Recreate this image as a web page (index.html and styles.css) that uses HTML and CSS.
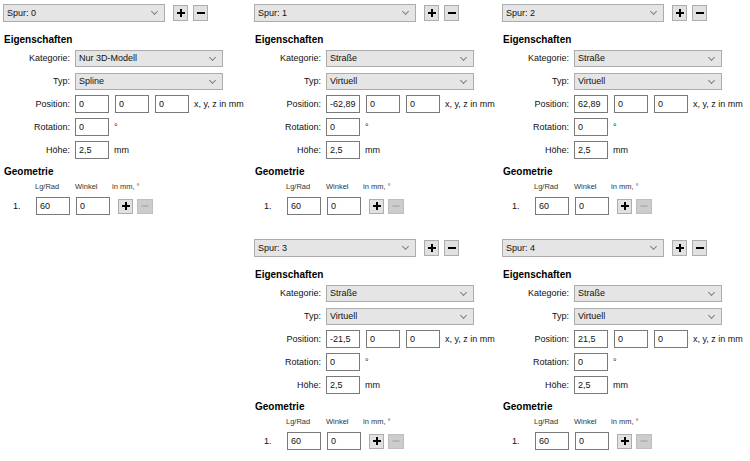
FILE: index.html
```html
<!DOCTYPE html>
<html lang="de">
<head>
    <meta charset="UTF-8">
    <meta name="viewport" content="width=device-width, initial-scale=1.0">
    <title>Spuren</title>
    <link rel="stylesheet" href="styles.css">
</head>
<body>
    <div class="sheet">
        <section class="panel">
            <div class="spur-row">
                <div class="combo spur">Spur: 0</div>
                <button class="tool"><svg viewBox="0 0 10 10"><path d="M5 1V9M1 5H9"/></svg></button>
                <button class="tool"><svg viewBox="0 0 10 10"><path d="M1 5H9"/></svg></button>
            </div>
            <h2 class="heading">Eigenschaften</h2>
            <div class="form">
                <label>Kategorie:</label>
                <div class="combo wide">Nur 3D-Modell</div>
                <label>Typ:</label>
                <div class="combo wide">Spline</div>
                <label>Position:</label>
                <div class="line">
                    <input class="field" value="0"><input class="field" value="0"><input class="field" value="0">
                    <span class="unit">x, y, z in mm</span>
                </div>
                <label>Rotation:</label>
                <div class="line"><input class="field" value="0"><span class="unit">°</span></div>
                <label>Höhe:</label>
                <div class="line"><input class="field" value="2,5"><span class="unit">mm</span></div>
            </div>
            <h2 class="heading geo">Geometrie</h2>
            <div class="geo-head"><span class="c1">Lg/Rad</span><span class="c2">Winkel</span><span>in mm, °</span></div>
            <div class="geo-row">
                <span class="num">1.</span>
                <input class="field" value="60"><input class="field" value="0">
                <button class="tool small"><svg viewBox="0 0 10 10"><path d="M5 1V9M1 5H9"/></svg></button>
                <button class="tool small off"><svg viewBox="0 0 10 10"><path d="M1.5 5H8.5"/></svg></button>
            </div>
        </section>

        <section class="panel">
            <div class="spur-row">
                <div class="combo spur">Spur: 1</div>
                <button class="tool"><svg viewBox="0 0 10 10"><path d="M5 1V9M1 5H9"/></svg></button>
                <button class="tool"><svg viewBox="0 0 10 10"><path d="M1 5H9"/></svg></button>
            </div>
            <h2 class="heading">Eigenschaften</h2>
            <div class="form">
                <label>Kategorie:</label>
                <div class="combo wide">Straße</div>
                <label>Typ:</label>
                <div class="combo wide">Virtuell</div>
                <label>Position:</label>
                <div class="line">
                    <input class="field" value="-62,89"><input class="field" value="0"><input class="field" value="0">
                    <span class="unit">x, y, z in mm</span>
                </div>
                <label>Rotation:</label>
                <div class="line"><input class="field" value="0"><span class="unit">°</span></div>
                <label>Höhe:</label>
                <div class="line"><input class="field" value="2,5"><span class="unit">mm</span></div>
            </div>
            <h2 class="heading geo">Geometrie</h2>
            <div class="geo-head"><span class="c1">Lg/Rad</span><span class="c2">Winkel</span><span>in mm, °</span></div>
            <div class="geo-row">
                <span class="num">1.</span>
                <input class="field" value="60"><input class="field" value="0">
                <button class="tool small"><svg viewBox="0 0 10 10"><path d="M5 1V9M1 5H9"/></svg></button>
                <button class="tool small off"><svg viewBox="0 0 10 10"><path d="M1.5 5H8.5"/></svg></button>
            </div>
        </section>

        <section class="panel">
            <div class="spur-row">
                <div class="combo spur">Spur: 2</div>
                <button class="tool"><svg viewBox="0 0 10 10"><path d="M5 1V9M1 5H9"/></svg></button>
                <button class="tool"><svg viewBox="0 0 10 10"><path d="M1 5H9"/></svg></button>
            </div>
            <h2 class="heading">Eigenschaften</h2>
            <div class="form">
                <label>Kategorie:</label>
                <div class="combo wide">Straße</div>
                <label>Typ:</label>
                <div class="combo wide">Virtuell</div>
                <label>Position:</label>
                <div class="line">
                    <input class="field" value="62,89"><input class="field" value="0"><input class="field" value="0">
                    <span class="unit">x, y, z in mm</span>
                </div>
                <label>Rotation:</label>
                <div class="line"><input class="field" value="0"><span class="unit">°</span></div>
                <label>Höhe:</label>
                <div class="line"><input class="field" value="2,5"><span class="unit">mm</span></div>
            </div>
            <h2 class="heading geo">Geometrie</h2>
            <div class="geo-head"><span class="c1">Lg/Rad</span><span class="c2">Winkel</span><span>in mm, °</span></div>
            <div class="geo-row">
                <span class="num">1.</span>
                <input class="field" value="60"><input class="field" value="0">
                <button class="tool small"><svg viewBox="0 0 10 10"><path d="M5 1V9M1 5H9"/></svg></button>
                <button class="tool small off"><svg viewBox="0 0 10 10"><path d="M1.5 5H8.5"/></svg></button>
            </div>
        </section>

        <div class="empty"></div>

        <section class="panel">
            <div class="spur-row">
                <div class="combo spur">Spur: 3</div>
                <button class="tool"><svg viewBox="0 0 10 10"><path d="M5 1V9M1 5H9"/></svg></button>
                <button class="tool"><svg viewBox="0 0 10 10"><path d="M1 5H9"/></svg></button>
            </div>
            <h2 class="heading">Eigenschaften</h2>
            <div class="form">
                <label>Kategorie:</label>
                <div class="combo wide">Straße</div>
                <label>Typ:</label>
                <div class="combo wide">Virtuell</div>
                <label>Position:</label>
                <div class="line">
                    <input class="field" value="-21,5"><input class="field" value="0"><input class="field" value="0">
                    <span class="unit">x, y, z in mm</span>
                </div>
                <label>Rotation:</label>
                <div class="line"><input class="field" value="0"><span class="unit">°</span></div>
                <label>Höhe:</label>
                <div class="line"><input class="field" value="2,5"><span class="unit">mm</span></div>
            </div>
            <h2 class="heading geo">Geometrie</h2>
            <div class="geo-head"><span class="c1">Lg/Rad</span><span class="c2">Winkel</span><span>in mm, °</span></div>
            <div class="geo-row">
                <span class="num">1.</span>
                <input class="field" value="60"><input class="field" value="0">
                <button class="tool small"><svg viewBox="0 0 10 10"><path d="M5 1V9M1 5H9"/></svg></button>
                <button class="tool small off"><svg viewBox="0 0 10 10"><path d="M1.5 5H8.5"/></svg></button>
            </div>
        </section>

        <section class="panel">
            <div class="spur-row">
                <div class="combo spur">Spur: 4</div>
                <button class="tool"><svg viewBox="0 0 10 10"><path d="M5 1V9M1 5H9"/></svg></button>
                <button class="tool"><svg viewBox="0 0 10 10"><path d="M1 5H9"/></svg></button>
            </div>
            <h2 class="heading">Eigenschaften</h2>
            <div class="form">
                <label>Kategorie:</label>
                <div class="combo wide">Straße</div>
                <label>Typ:</label>
                <div class="combo wide">Virtuell</div>
                <label>Position:</label>
                <div class="line">
                    <input class="field" value="21,5"><input class="field" value="0"><input class="field" value="0">
                    <span class="unit">x, y, z in mm</span>
                </div>
                <label>Rotation:</label>
                <div class="line"><input class="field" value="0"><span class="unit">°</span></div>
                <label>Höhe:</label>
                <div class="line"><input class="field" value="2,5"><span class="unit">mm</span></div>
            </div>
            <h2 class="heading geo">Geometrie</h2>
            <div class="geo-head"><span class="c1">Lg/Rad</span><span class="c2">Winkel</span><span>in mm, °</span></div>
            <div class="geo-row">
                <span class="num">1.</span>
                <input class="field" value="60"><input class="field" value="0">
                <button class="tool small"><svg viewBox="0 0 10 10"><path d="M5 1V9M1 5H9"/></svg></button>
                <button class="tool small off"><svg viewBox="0 0 10 10"><path d="M1.5 5H8.5"/></svg></button>
            </div>
        </section>
    </div>
</body>
</html>
```

FILE: styles.css
```css
body {
    margin: 0;
    padding: 0;
    background-color: #ffffff;
    color: #111111;
    font-family: 'Liberation Sans', Arial, sans-serif;
    font-size: 9px;
}

.sheet {
    display: grid;
    grid-template-columns: 251px 248px 251px;
    grid-template-rows: 235px auto;
}

.panel {
    padding-top: 4px;
}

.spur-row {
    display: flex;
    align-items: center;
    height: 18px;
    padding-left: 3px;
}

.combo {
    position: relative;
    box-sizing: border-box;
    height: 17px;
    line-height: 15px;
    padding-left: 3px;
    background-color: #e5e5e5;
    border: 1px solid #acacac;
    white-space: nowrap;
}

/* kleiner Pfeil rechts in der Auswahlbox */
.combo::after {
    content: "";
    position: absolute;
    right: 7px;
    top: 4px;
    width: 4px;
    height: 4px;
    border-right: 1px solid #808080;
    border-bottom: 1px solid #808080;
    transform: rotate(45deg);
}

.combo.spur {
    width: 162px;
    height: 18px;
    line-height: 16px;
    margin-right: 8px;
}

.combo.wide {
    width: 148px;
}

.tool {
    box-sizing: border-box;
    width: 15px;
    height: 16px;
    margin: 0 5px 0 0;
    padding: 0;
    background-color: #e1e1e1;
    border: 1px solid #adadad;
    display: flex;
    align-items: center;
    justify-content: center;
}

.tool svg {
    width: 10px;
    height: 10px;
    fill: none;
    stroke: #000000;
    stroke-width: 2;
}

.tool.small {
    height: 15px;
    margin-right: 4px;
}

.tool.off {
    width: 16px;
    background-color: #cccccc;
    border-color: #bfbfbf;
}

.tool.off svg {
    stroke: #a6a6a6;
    stroke-width: 1.2;
}

.heading {
    margin: 12px 0 0 4px;
    height: 12px;
    line-height: 12px;
    font-size: 10px;
    font-weight: bold;
    color: #000000;
}

.heading.geo {
    margin-top: 7px;
}

.form {
    display: grid;
    grid-template-columns: 70px auto;
    grid-auto-rows: 18px;
    column-gap: 5px;
    row-gap: 5px;
    margin-top: 3px;
    align-items: center;
}

.form label {
    text-align: right;
}

.line {
    display: flex;
    align-items: center;
    gap: 6px;
}

.field {
    box-sizing: border-box;
    width: 34px;
    height: 18px;
    margin: 0;
    padding: 0 0 0 3px;
    border: 1px solid #7a7a7a;
    border-radius: 0;
    background-color: #ffffff;
    color: #111111;
    font-family: 'Liberation Sans', Arial, sans-serif;
    font-size: 9px;
}

.unit {
    margin-left: -1px;
}

.geo-head {
    display: flex;
    height: 12px;
    line-height: 12px;
    margin-top: 3px;
    padding-left: 35px;
    font-size: 7.5px;
    color: #333333;
}

.geo-head .c1 {
    width: 40px;
}

.geo-head .c2 {
    width: 37px;
}

.geo-row {
    display: flex;
    align-items: center;
    height: 18px;
    margin-top: 4px;
}

.geo-row .num {
    box-sizing: border-box;
    width: 36px;
    padding-left: 13px;
}

.geo-row .field + .field {
    margin-left: 6px;
    margin-right: 8px;
}
```
